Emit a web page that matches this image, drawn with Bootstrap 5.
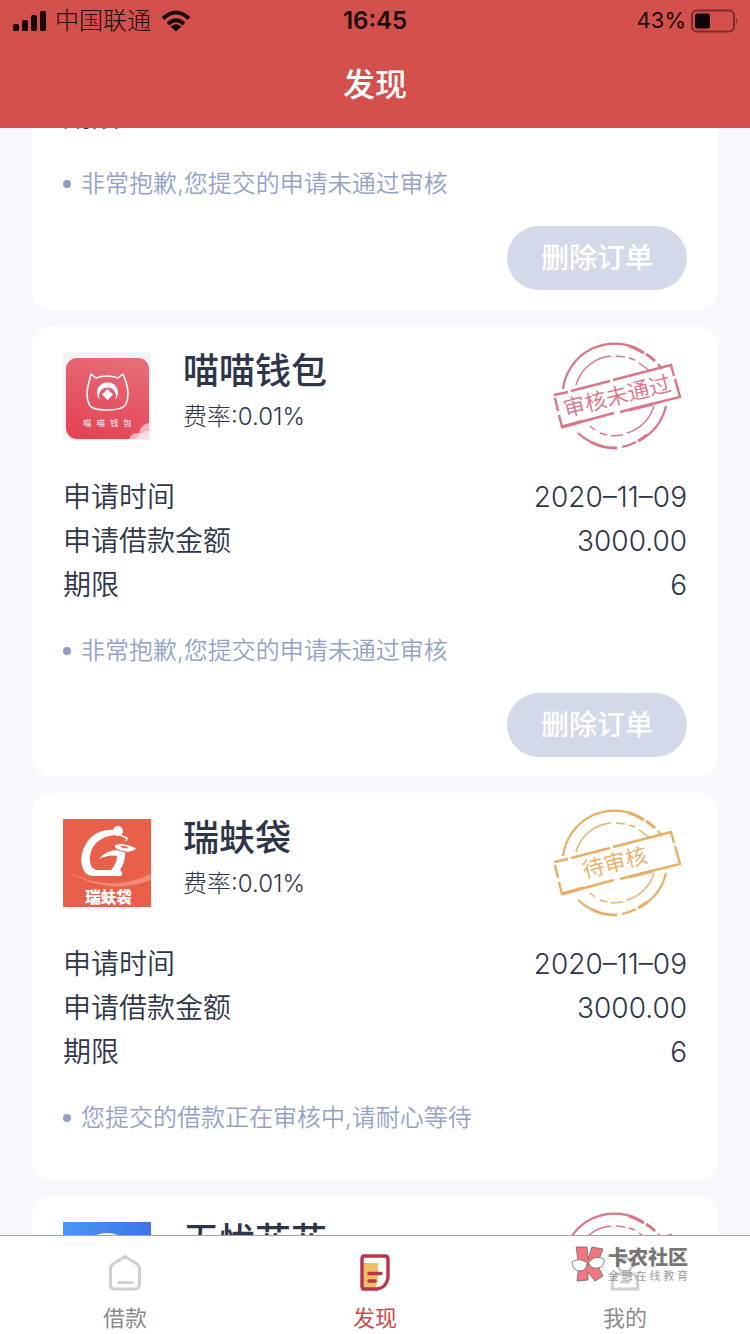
<!DOCTYPE html>
<html lang="zh-CN">
<head>
<meta charset="utf-8">
<meta name="viewport" content="width=device-width, initial-scale=1">
<title>发现</title>
<link rel="stylesheet" href="https://cdn.jsdelivr.net/npm/bootstrap@5.3.0/dist/css/bootstrap.min.css">
<style>
  body { background: #f7f8fe; color: #2e3549; font-family: Inter, "Noto Sans CJK SC", sans-serif; }
  a { text-decoration: none; }
  .app-head { background: #d3504c; }
  .status-bar { height: 41px; padding: 0 12px; color: #1a0808; font-size: 22px; line-height: 41px; }
  .carrier { font-size: 24px; font-weight: 300; }
  .clock { font-size: 24px; }
  .page-title { font-size: 32px; line-height: 87px; font-weight: 500; }
  .order-list { padding: 0 32px; gap: 16px; }
  .order { border: 0; border-radius: 20px; padding: 16px 31px 20px; color: inherit; flex-shrink: 0; }
  .order-cut { border-radius: 0 0 20px 20px; padding-top: 0; margin-top: -33px; }
  .app-icon { width: 88px; height: 88px; margin: 10px 32px 0 0; }
  .order-name { font-size: 36px; line-height: 52px; font-weight: 500; margin: 3px 0 0; }
  .rate { font-size: 24px; line-height: 40px; font-weight: 300; }
  .facts { font-size: 28px; line-height: 44px; margin: 23px 0 0; font-weight: 350; }
  .order-cut .facts { margin-top: 0; }
  .facts dt, .facts dd { font-weight: inherit; margin: 0; }
  .facts dd { font-weight: 300; }
  .note { color: #94a2c9; font-size: 24px; line-height: 36px; margin: 26px 0 24px; gap: 10px; font-weight: 350; }
  .order-cut .note { margin-top: 27px; }
  .note::before { content: ""; width: 8px; height: 8px; border-radius: 50%; background: #8f9dc9; }
  .btn-del { width: 180px; height: 64px; border-radius: 32px; background: #d4d9ea; color: #fff; font-size: 28px; font-weight: 500; border: 0; padding: 0; }
  .tabs { border-top: 1px solid #a3a3ab; padding: 18px 0 0; }
  .tabs a { color: #8c8c8c; font-size: 22px; line-height: 32px; height: 80px; gap: 11px; }
  .tabs a.active { color: #cb4a4b; }
  .brand-mark { right: 62px; top: 10px; gap: 3px; opacity: .85; }
  .brand-name { font-size: 20px; line-height: 24px; font-weight: 900; color: #606060; }
  .brand-sub { font-size: 11px; line-height: 12px; color: #8a8a8a; text-align-last: justify; }
  .stamp { font-size: 22px; font-weight: 350; }
</style>
</head>
<body>
<svg width="0" height="0" class="position-absolute" aria-hidden="true">
  <symbol id="frame" viewBox="0 0 134 110">
    <g fill="none" stroke="currentColor">
      <path stroke-width="2.200" d="M10 47A52 52 0 0 1 90 10M105 22L109 27M113 64A52 52 0 0 1 87 98M83 100A52 52 0 0 1 69 105M38 100A52 52 0 0 1 25 91"/>
      <path stroke-width="3" d="M76 4A52 52 0 0 1 91 11M93 12A52 52 0 0 1 102 19M64 106A52 52 0 0 1 38 100M85 99A52 52 0 0 0 94 93"/>
      <path stroke-width="1.400" d="M23 43A40 40 0 0 1 58 14M63 14L72 15M76 16L82 18M86 21L97 29M101 64A40 40 0 0 1 74 91M70 93L58 94M54 93L47 91M42 88L37 84"/>
      <path stroke-width="2.400" d="M1 53L15 50M18 49L57 39M60 38L118 23L121 34M122 37L127 55L67 70M61 71L9 85L6 73M5 69L2 56"/>
      <path stroke-width="3" d="M9 85L30 79M76 68L100 62"/>
    </g>
  </symbol>
</svg>
<div class="vh-100 d-flex flex-column overflow-hidden">
  <header class="app-head position-relative z-1">
    <div class="status-bar row g-0">
      <div class="col d-flex align-items-center gap-2">
        <svg width="35" height="22" viewBox="0 0 35 22" fill="currentColor"><rect x="1" y="14" width="6" height="7" rx="1.500"/><rect x="10" y="10" width="6" height="11" rx="1.500"/><rect x="19" y="5" width="6" height="16" rx="1.500"/><rect x="28" y="1" width="6" height="20" rx="1.500"/></svg>
        <span class="carrier">中国联通</span>
        <svg width="34" height="24" viewBox="0 0 34 24" fill="none" stroke="currentColor" stroke-width="4"><path d="M4 9.500Q17-2.500 30 9.500"/><path d="M9 15Q17 7.500 25 15"/><path d="M17 22.500L11.500 17.500Q17 13 22.500 17.500Z" fill="currentColor" stroke="none"/></svg>
      </div>
      <div class="col-auto fw-semibold clock">16:45</div>
      <div class="col d-flex align-items-center justify-content-end gap-1">
        <span>43%</span>
        <svg width="48" height="24" viewBox="0 0 48 24"><rect x="2" y="1.500" width="42" height="21" rx="5" fill="none" stroke="#7d2c2b" stroke-width="2"/><rect x="5" y="4.500" width="15" height="15" rx="2.500" fill="#100404"/><path d="M46 9q2.500 3 0 6z" fill="#7d2c2b"/></svg>
      </div>
    </div>
    <h1 class="page-title text-white text-center m-0">发现</h1>
  </header>

  <main class="order-list d-flex flex-column flex-fill overflow-hidden">
    <article class="order order-cut card">
      <dl class="facts">
        <div class="d-flex justify-content-between"><dt>期限</dt></div>
      </dl>
      <p class="note d-flex align-items-center">非常抱歉,您提交的申请未通过审核</p>
      <button type="button" class="btn btn-del ms-auto">删除订单</button>
    </article>

    <article class="order card">
      <div class="d-flex align-items-start">
        <svg class="app-icon" viewBox="0 0 88 88">
          <defs><linearGradient id="cat" x1=".6" y1="0" x2=".3" y2="1"><stop stop-color="#e66c78"/><stop offset="1" stop-color="#e54254"/></linearGradient></defs>
          <rect width="88" height="88" fill="#f3f3f5"/>
          <rect x="3" y="6" width="83" height="81" rx="11" fill="url(#cat)"/>
          <path d="M66 87Q69 80 76 81Q78 72 86 71V87Z" fill="#f6b3bb"/><path d="M73 87Q78 79 86 79V87Z" fill="#fbdde0"/>
          <path d="M28 22L33 26Q44 22 55 26L60 22L63 30Q67 43 63 52Q60 58 44 58Q28 58 26 52Q22 43 26 30Z" fill="none" stroke="#fff" stroke-width="1.600" stroke-linejoin="round"/>
          <path d="M37 48A10.500 10.500 0 1 1 52 48A8.500 8.500 0 1 0 37 48Z" fill="#fff"/>
          <path d="M44.500 37L50 42.500L44.500 48L39 42.500Z" fill="#fff"/>
          <text x="20 33.500 47 60" y="74" font-size="8.500" fill="#fff">喵喵钱包</text>
        </svg>
        <div class="flex-fill">
          <h2 class="order-name">喵喵钱包</h2>
          <div class="rate">费率:0.01%</div>
        </div>
        <svg class="stamp" width="134" height="110" color="#dc7488"><use href="#frame"/><text transform="rotate(-14 64 54)" x="64" y="62" text-anchor="middle" fill="currentColor">审核未通过</text></svg>
      </div>
      <dl class="facts">
        <div class="d-flex justify-content-between"><dt>申请时间</dt><dd>2020–11–09</dd></div>
        <div class="d-flex justify-content-between"><dt>申请借款金额</dt><dd>3000.00</dd></div>
        <div class="d-flex justify-content-between"><dt>期限</dt><dd>6</dd></div>
      </dl>
      <p class="note d-flex align-items-center">非常抱歉,您提交的申请未通过审核</p>
      <button type="button" class="btn btn-del ms-auto">删除订单</button>
    </article>

    <article class="order card">
      <div class="d-flex align-items-start">
        <svg class="app-icon" viewBox="0 0 88 88">
          <rect width="88" height="88" fill="#e9604a"/>
          <path d="M0 50Q44 76 88 55V61Q44 78 0 50Z" fill="#f18a76"/>
          <path d="M54 11Q34 9 24 23Q16 35 19 47Q21 56 29 57H58Q61 54 57 51Q63 42 62 32L55 31Q43 31 36 40Q46 35 54 37Q54 44 48 51H33Q26 49 27 37Q30 18 53 16Z" fill="#fff"/>
          <circle cx="55" cy="12" r="5" fill="#fff"/>
          <path d="M57 16L64 19L63 22" fill="none" stroke="#fff" stroke-width="1.500"/>
          <path d="M51 26Q58 22 74 29Q70 34 62 33Q51 31 51 26Z" fill="#fff" stroke="#e9604a"/>
          <path d="M57 27Q62 26 66 29Q60 30 57 27Z" fill="#e9604a"/>
          <text x="45.500" y="84" font-size="15.500" font-weight="900" text-anchor="middle" fill="#fff">瑞蚨袋</text>
        </svg>
        <div class="flex-fill">
          <h2 class="order-name">瑞蚨袋</h2>
          <div class="rate">费率:0.01%</div>
        </div>
        <svg class="stamp" width="134" height="110" color="#e9ae65"><use href="#frame"/><text transform="rotate(-14 64 54)" x="62" y="61" text-anchor="middle" fill="currentColor">待审核</text></svg>
      </div>
      <dl class="facts">
        <div class="d-flex justify-content-between"><dt>申请时间</dt><dd>2020–11–09</dd></div>
        <div class="d-flex justify-content-between"><dt>申请借款金额</dt><dd>3000.00</dd></div>
        <div class="d-flex justify-content-between"><dt>期限</dt><dd>6</dd></div>
      </dl>
      <p class="note d-flex align-items-center">您提交的借款正在审核中,请耐心等待</p>
    </article>

    <article class="order card">
      <div class="d-flex align-items-start">
        <svg class="app-icon" viewBox="0 0 88 88">
          <defs><linearGradient id="sky"><stop stop-color="#4897f3"/><stop offset="1" stop-color="#3d74e9"/></linearGradient></defs>
          <rect width="88" height="88" fill="url(#sky)"/><circle cx="44" cy="41" r="30" fill="#fff"/>
        </svg>
        <h2 class="order-name flex-fill">无忧花花</h2>
        <svg class="stamp" width="134" height="110" color="#dc7488"><use href="#frame"/></svg>
      </div>
    </article>
  </main>

  <nav class="tabs bg-white position-relative flex-shrink-0">
    <div class="row g-0">
      <a href="#" class="col d-flex flex-column align-items-center"><svg width="36" height="37" viewBox="0 0 36 37" fill="none" stroke="#cfcfcf" stroke-width="3" stroke-linecap="round" stroke-linejoin="round"><path d="M18 2.500L30 10Q32.500 12 32.500 15V30Q32.500 35 28 35H8Q3.500 35 3.500 30V15Q3.500 12 6 10Z"/><path d="M12 28.500H25"/></svg>借款</a>
      <a href="#" class="col active d-flex flex-column align-items-center" aria-current="page"><svg width="36" height="37" viewBox="0 0 36 37" fill="none" stroke="#b9344e" stroke-width="3.400" stroke-linecap="round" stroke-linejoin="round"><path d="M6 9H21V27L18 34H6Z" fill="#edc065" stroke="none"/><path d="M7 2H28Q31 2 31 5V24Q29 34 20 35H7Q5 35 5 32V5Q5 2 7 2Z"/><path d="M12 19.500H24M12 27H18"/></svg>发现</a>
      <a href="#" class="col d-flex flex-column align-items-center"><svg width="36" height="37" viewBox="0 0 36 37" fill="none" stroke="#cfcfcf" stroke-width="3" stroke-linecap="round" stroke-linejoin="round"><circle cx="18" cy="11" r="7"/><path d="M9 20H27Q31 24 31 35H5Q5 24 9 20ZM14 28H22"/></svg>我的</a>
    </div>
    <div class="brand-mark position-absolute d-flex">
      <svg width="34" height="37" viewBox="0 0 34 37" fill="#ef5f6b" stroke="#4c4c4c" stroke-width=".8"><path d="M5 1L16 1L17 13L21 1L32 3L26 18L32 30L24 35L17 26V34L6 35L8 20Z"/><path d="M1 16Q7 12 13 15Q16 16 17 18Q19 14 23 12Q28 10 33 13Q34 21 27 22Q20 23 18 18H16Q15 25 9 25Q2 25 1 16Z" fill="#fff"/></svg>
      <div><div class="brand-name">卡农社区</div><div class="brand-sub">金融在线教育</div></div>
    </div>
  </nav>
</div>
<script src="https://cdn.jsdelivr.net/npm/bootstrap@5.3.0/dist/js/bootstrap.bundle.min.js"></script>
</body>
</html>
